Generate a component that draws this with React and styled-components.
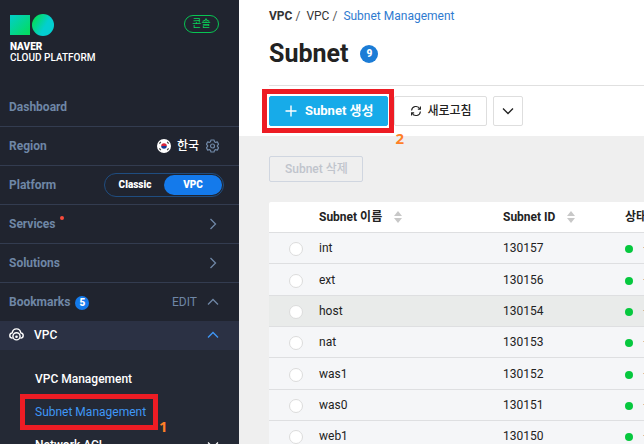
import React, { useState } from "react";
import styled, { createGlobalStyle, css } from "styled-components";

const GlobalStyle = createGlobalStyle`
  *, *::before, *::after { box-sizing: border-box; }
  body {
    margin: 0;
    font-family: Roboto, "Noto Sans CJK KR", sans-serif;
    font-size: 12px;
    line-height: 16px;
    color: #222;
    background: #efefef;
  }
  button, input { font: inherit; margin: 0; }
  a { text-decoration: none; color: inherit; }
  ul, ol, h1 { margin: 0; padding: 0; list-style: none; }
`;

const Page = styled.div`
  display: grid;
  grid-template-columns: 239px minmax(0, 1fr);
  height: 100vh;
  overflow: hidden;
`;

/* Sidebar */

const Sidebar = styled.aside`
  display: flex;
  flex-direction: column;
  background: #20242f;
  color: #fff;
  overflow: hidden;
`;

const Brand = styled.div`
  display: flex;
  flex-shrink: 0;
  justify-content: space-between;
  align-items: flex-start;
  height: 88px;
  padding: 14px 20px 0 10px;
`;

const BrandLink = styled.a`
  display: flex;
  flex-direction: column;
  font-size: 10px;
  font-weight: 500;
  line-height: 11px;
`;

const BrandMark = styled.svg`
  margin-bottom: 5px;
`;

const BrandName = styled.strong`
  font-weight: 900;
`;

const ConsoleBadge = styled.span`
  display: flex;
  align-items: center;
  justify-content: center;
  width: 35px;
  height: 18px;
  margin-top: 1px;
  border: 1px solid #08c453;
  border-radius: 9px;
  color: #08d35a;
  font-size: 10px;
  line-height: 14px;
`;

const NavRow = styled.div`
  display: flex;
  flex-shrink: 0;
  align-items: center;
  justify-content: space-between;
  height: ${(p) => (p.$last ? "38px" : "39px")};
  padding: 0 ${(p) => p.$end || "20px"} 0 9px;
  border-bottom: ${(p) => (p.$last ? "0" : "1px solid #333c50")};
`;

const NavLabel = styled.a`
  display: flex;
  align-items: center;
  color: #6f87a6;
  font-weight: 700;
`;

const NavTools = styled.div`
  display: flex;
  align-items: center;
  gap: ${(p) => p.$gap || "7px"};
`;

const RegionName = styled.span`
  font-size: 12px;
  font-weight: 500;
`;

const NewDot = styled.i`
  align-self: flex-start;
  width: 4px;
  height: 4px;
  margin-left: 4px;
  border-radius: 50%;
  background: #fa4b3c;
`;

const IconButton = styled.button`
  display: flex;
  padding: 0;
  border: 0;
  background: none;
  color: ${(p) => p.$color || "#6f87a6"};
  cursor: pointer;
`;

const EditButton = styled(IconButton)`
  font-weight: 400;
`;

const Switcher = styled.div`
  display: grid;
  grid-template-columns: 1fr 1fr;
  width: 120px;
  height: 24px;
  padding: 1px;
  border: 1px solid #1f4d80;
  border-radius: 12px;
`;

const SwitchOption = styled.button`
  padding: 0;
  border: 0;
  border-radius: 10px;
  background: ${(p) => (p.$active ? "#147aeb" : "transparent")};
  color: #fff;
  font-size: 10px;
  font-weight: 900;
  line-height: 20px;
  cursor: pointer;
`;

const Count = styled.span`
  display: inline-flex;
  align-items: center;
  justify-content: center;
  width: ${(p) => (p.$large ? "18px" : "14px")};
  height: ${(p) => (p.$large ? "18px" : "14px")};
  border-radius: 50%;
  background: ${(p) => (p.$large ? "#1b7cd6" : "#147aeb")};
  color: #fff;
  font-size: 10px;
  font-weight: 900;
  line-height: 14px;
`;

const BookmarkCount = styled(Count)`
  margin: 2px 0 0 5px;
`;

const ServiceRow = styled.button`
  display: flex;
  flex-shrink: 0;
  align-items: center;
  height: 29px;
  padding: 0 20px 2px 9px;
  border: 0;
  background: #2b3144;
  color: #fff;
  font-weight: 500;
  cursor: pointer;
`;

const ServiceName = styled.span`
  flex: 1;
  margin-left: 10px;
  text-align: left;
`;

const SubMenu = styled.ul`
  flex: 1 0 auto;
  padding-top: 12px;
  background: #242935;
`;

const SubItem = styled.li`
  display: flex;
  align-items: center;
  justify-content: space-between;
  height: 33px;
  padding: 0 20px 0 35px;
`;

const SubLink = styled.a`
  position: relative;
  color: ${(p) => (p.$active ? "#3f97f6" : "#fff")};
  font-weight: ${(p) => (p.$active ? 400 : 500)};
`;

/* Tutorial callouts */

const Callout = styled.span`
  position: absolute;
  inset: ${(p) => p.$inset};
  border: 5px solid #ed1c24;
  pointer-events: none;
`;

const CalloutNumber = styled.b`
  position: absolute;
  top: 100%;
  left: 100%;
  margin: ${(p) => p.$shift};
  color: #ff7f27;
  font: 700 15px/16px "Open Sans", sans-serif;
`;

/* Main area */

const Main = styled.main`
  min-width: 0;
  overflow: hidden;
  background: #efefef;
`;

const PageHead = styled.header`
  height: 136px;
  padding: 8px 0 10px 30px;
  background: #fff;
`;

const Crumbs = styled.ol`
  display: flex;
  gap: 4px;
`;

const Crumb = styled.li`
  color: ${(p) => (p.$current ? "#2f7bd0" : "#333")};
  font-weight: ${(p) => (p.$root ? 700 : 400)};
  &:not(:last-child)::after {
    content: "/";
    margin: 0 2px 0 3px;
    color: #555;
    font-weight: 400;
  }
`;

const TitleRow = styled.div`
  display: flex;
  align-items: center;
  gap: 12px;
  height: 62px;
  padding-bottom: 2px;
  border-bottom: 1px solid #e0e0e0;
`;

const Title = styled.h1`
  font-size: 25px;
  font-weight: 700;
  line-height: 30px;
`;

const Actions = styled.div`
  display: flex;
  gap: 6px;
  margin-top: 10px;
`;

const Button = styled.button`
  position: relative;
  display: inline-flex;
  align-items: center;
  justify-content: center;
  gap: 5px;
  height: 30px;
  padding: 0 14px 0 15px;
  border: 1px solid #dedede;
  border-radius: 2px;
  background: #fff;
  color: #222;
  font-weight: 500;
  white-space: nowrap;
  cursor: pointer;
  ${(p) =>
    p.$kind === "primary" &&
    css`
      gap: 8px;
      border-color: #17abe9;
      background: #17abe9;
      color: #fff;
      font-size: 13px;
      font-weight: 700;
    `}
  ${(p) =>
    p.$kind === "menu" &&
    css`
      width: 30px;
      padding: 0;
    `}
  &:disabled {
    height: 26px;
    border-color: #d0d6e0;
    background: transparent;
    color: #c0c4cc;
    cursor: default;
  }
`;

const Content = styled.section`
  padding: 20px 0 0 30px;
`;

const Table = styled.table`
  width: 100%;
  min-width: 500px;
  margin-top: 20px;
  border-collapse: separate;
  border-spacing: 0;
  table-layout: fixed;
  border-radius: 2px 0 0 0;
  background: #fff;
`;

const Col = styled.col`
  width: ${(p) => p.$width};
`;

const HeadCell = styled.th`
  height: 31px;
  padding: 0;
  border-bottom: 1px solid #dedfe1;
  font-weight: 700;
  text-align: left;
  white-space: nowrap;
`;

const HeadInner = styled.span`
  display: flex;
  align-items: center;
  gap: 12px;
`;

const Row = styled.tr`
  height: 31px;
  background: ${(p) => (p.$hover ? "#e9ebea" : "#f5f6f8")};
  &:nth-child(3n + 2) {
    height: 32px;
  }
`;

const Cell = styled.td`
  padding: 0;
  border-bottom: 1px solid #dedfe1;
  white-space: nowrap;
`;

const Radio = styled.input`
  appearance: none;
  display: block;
  width: 14px;
  height: 14px;
  margin: 2px 0 0 20px;
  border: 1px solid #dcdcdc;
  border-radius: 50%;
  background: #fff;
  &:checked {
    border: 4px solid #1b7cd6;
  }
`;

const Status = styled.span`
  display: flex;
  align-items: center;
  gap: 10px;
  color: #555;
  &::before {
    content: "";
    flex-shrink: 0;
    width: 8px;
    height: 8px;
    margin-top: 2px;
    border-radius: 50%;
    background: #06c83e;
  }
`;

/* Icons */

const turns = { down: 0, up: 180, right: -90 };

function Chevron({ dir = "down", size = 12 }) {
  return (
    <svg width={size} height={size} viewBox="0 0 12 12" fill="none" stroke="currentColor" strokeWidth="1.3" aria-hidden="true">
      <path d="M1 3.5 6 8.5 11 3.5" transform={`rotate(${turns[dir]} 6 6)`} />
    </svg>
  );
}

function Logo() {
  return (
    <BrandMark width="44" height="22" viewBox="0 0 44 22" aria-hidden="true">
      <defs>
        <linearGradient id="square" x1="0" y1="0" x2="1" y2="1">
          <stop offset=".1" stopColor="#03cfc0" />
          <stop offset=".9" stopColor="#04dc62" />
        </linearGradient>
        <linearGradient id="circle" x1="0" y1=".2" x2="1" y2=".8">
          <stop offset=".1" stopColor="#04dc62" />
          <stop offset=".6" stopColor="#03cfd0" />
        </linearGradient>
      </defs>
      <path fill="url(#square)" d="M0 1h20v20H0z" />
      <circle fill="url(#circle)" cx="33" cy="11" r="11" />
    </BrandMark>
  );
}

function KoreaFlag() {
  return (
    <svg width="14" height="14" viewBox="0 0 14 14" aria-hidden="true">
      <circle cx="7" cy="7" r="7" fill="#fff" />
      <path fill="#d8243c" d="M4.2 7a2.8 2.8 0 0 1 5.6 0z" />
      <path fill="#173a93" d="M9.8 7a2.8 2.8 0 0 1-5.6 0z" />
      <path stroke="#444" strokeWidth="1.2" d="m2.4 4.6 1.4-1.8M10.2 2.8l1.4 1.8M2.4 9.4l1.4 1.8M10.2 11.2l1.4-1.8" />
    </svg>
  );
}

function Gear() {
  return (
    <svg width="13" height="14" viewBox="0 0 13 14" fill="none" stroke="currentColor" strokeWidth="1.2" strokeLinejoin="round" aria-hidden="true">
      <path d="M5 1h3l.5 1.7 1.2.7 1.6-.5 1.3 2.4L11.4 6.5v1l1.2 1.2-1.3 2.4-1.6-.5-1.2.7L8 13H5l-.5-1.7-1.2-.7-1.6.5L.4 8.7 1.6 7.5v-1L.4 5.300l1.300-2.400 1.600.5 1.200-.7z" />
      <circle cx="6.5" cy="7" r="2" />
    </svg>
  );
}

function CloudIcon() {
  return (
    <svg width="15" height="13" viewBox="0 0 15 13" fill="none" stroke="currentColor" strokeWidth="1.4" aria-hidden="true">
      <path d="M3.6 10.3C1.9 10.2.8 9.1.8 7.6c0-1.4 1-2.5 2.4-2.7C3.6 2.5 5.2.9 7.5.9s3.9 1.6 4.3 4c1.4.2 2.4 1.3 2.4 2.7 0 1.5-1.1 2.6-2.8 2.7" />
      <circle cx="7.5" cy="8.3" r="3.6" />
      <circle cx="7.5" cy="8.7" r="1.3" fill="currentColor" stroke="none" />
    </svg>
  );
}

function PlusIcon() {
  return (
    <svg width="12" height="12" viewBox="0 0 12 12" stroke="currentColor" strokeWidth="1.4" aria-hidden="true">
      <path d="M6 .5v11M.5 6h11" />
    </svg>
  );
}

function RefreshIcon() {
  return (
    <svg width="12" height="12" viewBox="0 0 13 12" fill="none" stroke="currentColor" strokeWidth="1.2" aria-hidden="true">
      <path d="M1.7 5.5A4.8 4.8 0 0 1 10.7 3.6M11.3 6.5A4.8 4.8 0 0 1 2.3 8.4" />
      <path d="M11.3 1v3H8.5M1.7 11V8h2.8" />
    </svg>
  );
}

function SortIcon() {
  return (
    <svg width="8" height="12" viewBox="0 0 8 12" fill="#c8c8c8" aria-hidden="true">
      <path d="M4 0 8 5H0zM0 7h8l-4 5z" />
    </svg>
  );
}

const subnets = [
  ["int", "130157"],
  ["ext", "130156"],
  ["host", "130154"],
  ["nat", "130153"],
  ["was1", "130152"],
  ["was0", "130151"],
  ["web1", "130150"],
];

export default function App() {
  const [platform, setPlatform] = useState("VPC");
  const [selected, setSelected] = useState(null);

  return (
    <Page>
      <GlobalStyle />
      <Sidebar>
        <Brand>
          <BrandLink href="#">
            <Logo />
            <BrandName>NAVER</BrandName>
            <span>CLOUD PLATFORM</span>
          </BrandLink>
          <ConsoleBadge>콘솔</ConsoleBadge>
        </Brand>
        <NavRow>
          <NavLabel href="#">Dashboard</NavLabel>
        </NavRow>
        <NavRow>
          <NavLabel href="#">Region</NavLabel>
          <NavTools>
            <NavTools $gap="6px">
              <KoreaFlag />
              <RegionName>한국</RegionName>
            </NavTools>
            <IconButton aria-label="Region settings">
              <Gear />
            </IconButton>
          </NavTools>
        </NavRow>
        <NavRow $end="15px">
          <NavLabel href="#">Platform</NavLabel>
          <Switcher>
            {["Classic", "VPC"].map((name) => (
              <SwitchOption
                key={name}
                $active={platform === name}
                aria-pressed={platform === name}
                onClick={() => setPlatform(name)}
              >
                {name}
              </SwitchOption>
            ))}
          </Switcher>
        </NavRow>
        <NavRow>
          <NavLabel href="#">
            Services
            <NewDot />
          </NavLabel>
          <IconButton aria-label="Open services">
            <Chevron dir="right" />
          </IconButton>
        </NavRow>
        <NavRow>
          <NavLabel href="#">Solutions</NavLabel>
          <IconButton aria-label="Open solutions">
            <Chevron dir="right" />
          </IconButton>
        </NavRow>
        <NavRow $last>
          <NavLabel href="#">
            Bookmarks
            <BookmarkCount>5</BookmarkCount>
          </NavLabel>
          <NavTools $gap="10px">
            <EditButton>EDIT</EditButton>
            <IconButton aria-label="Collapse bookmarks">
              <Chevron dir="up" />
            </IconButton>
          </NavTools>
        </NavRow>
        <ServiceRow aria-expanded="true">
          <CloudIcon />
          <ServiceName>VPC</ServiceName>
          <IconButton as="span" $color="#3f97f6">
            <Chevron dir="up" />
          </IconButton>
        </ServiceRow>
        <SubMenu>
          <SubItem>
            <SubLink href="#">VPC Management</SubLink>
          </SubItem>
          <SubItem>
            <SubLink href="#" $active aria-current="page">
              Subnet Management
              <Callout $inset="-10px -12px -10px -15px">
                <CalloutNumber $shift="-7px 0 0 6px">1</CalloutNumber>
              </Callout>
            </SubLink>
          </SubItem>
          <SubItem>
            <SubLink href="#">Network ACL</SubLink>
            <IconButton aria-label="Expand Network ACL" $color="#fff">
              <Chevron />
            </IconButton>
          </SubItem>
        </SubMenu>
      </Sidebar>

      <Main>
        <PageHead>
          <Crumbs>
            <Crumb $root>VPC</Crumb>
            <Crumb>VPC</Crumb>
            <Crumb $current>
              <a href="#">Subnet Management</a>
            </Crumb>
          </Crumbs>
          <TitleRow>
            <Title>Subnet</Title>
            <Count $large>9</Count>
          </TitleRow>
          <Actions>
            <Button $kind="primary">
              <PlusIcon />
              Subnet 생성
              <Callout $inset="-8px -7px -8px -8px">
                <CalloutNumber $shift="2px 0 0 6px">2</CalloutNumber>
              </Callout>
            </Button>
            <Button>
              <RefreshIcon />
              새로고침
            </Button>
            <Button $kind="menu" aria-label="More actions">
              <Chevron />
            </Button>
          </Actions>
        </PageHead>
        <Content>
          <Button disabled>Subnet 삭제</Button>
          <Table>
            <colgroup>
              <Col $width="50px" />
              <Col $width="184px" />
              <Col $width="122px" />
              <Col />
            </colgroup>
            <thead>
              <tr>
                <HeadCell aria-label="선택" />
                <HeadCell>
                  <HeadInner>
                    Subnet 이름 <SortIcon />
                  </HeadInner>
                </HeadCell>
                <HeadCell>
                  <HeadInner>
                    Subnet ID <SortIcon />
                  </HeadInner>
                </HeadCell>
                <HeadCell>상태</HeadCell>
              </tr>
            </thead>
            <tbody>
              {subnets.map(([name, id]) => (
                <Row key={id} $hover={name === "host"}>
                  <Cell>
                    <Radio
                      type="radio"
                      name="subnet"
                      aria-label={name}
                      checked={selected === id}
                      onChange={() => setSelected(id)}
                    />
                  </Cell>
                  <Cell>{name}</Cell>
                  <Cell>{id}</Cell>
                  <Cell>
                    <Status>운영중</Status>
                  </Cell>
                </Row>
              ))}
            </tbody>
          </Table>
        </Content>
      </Main>
    </Page>
  );
}
